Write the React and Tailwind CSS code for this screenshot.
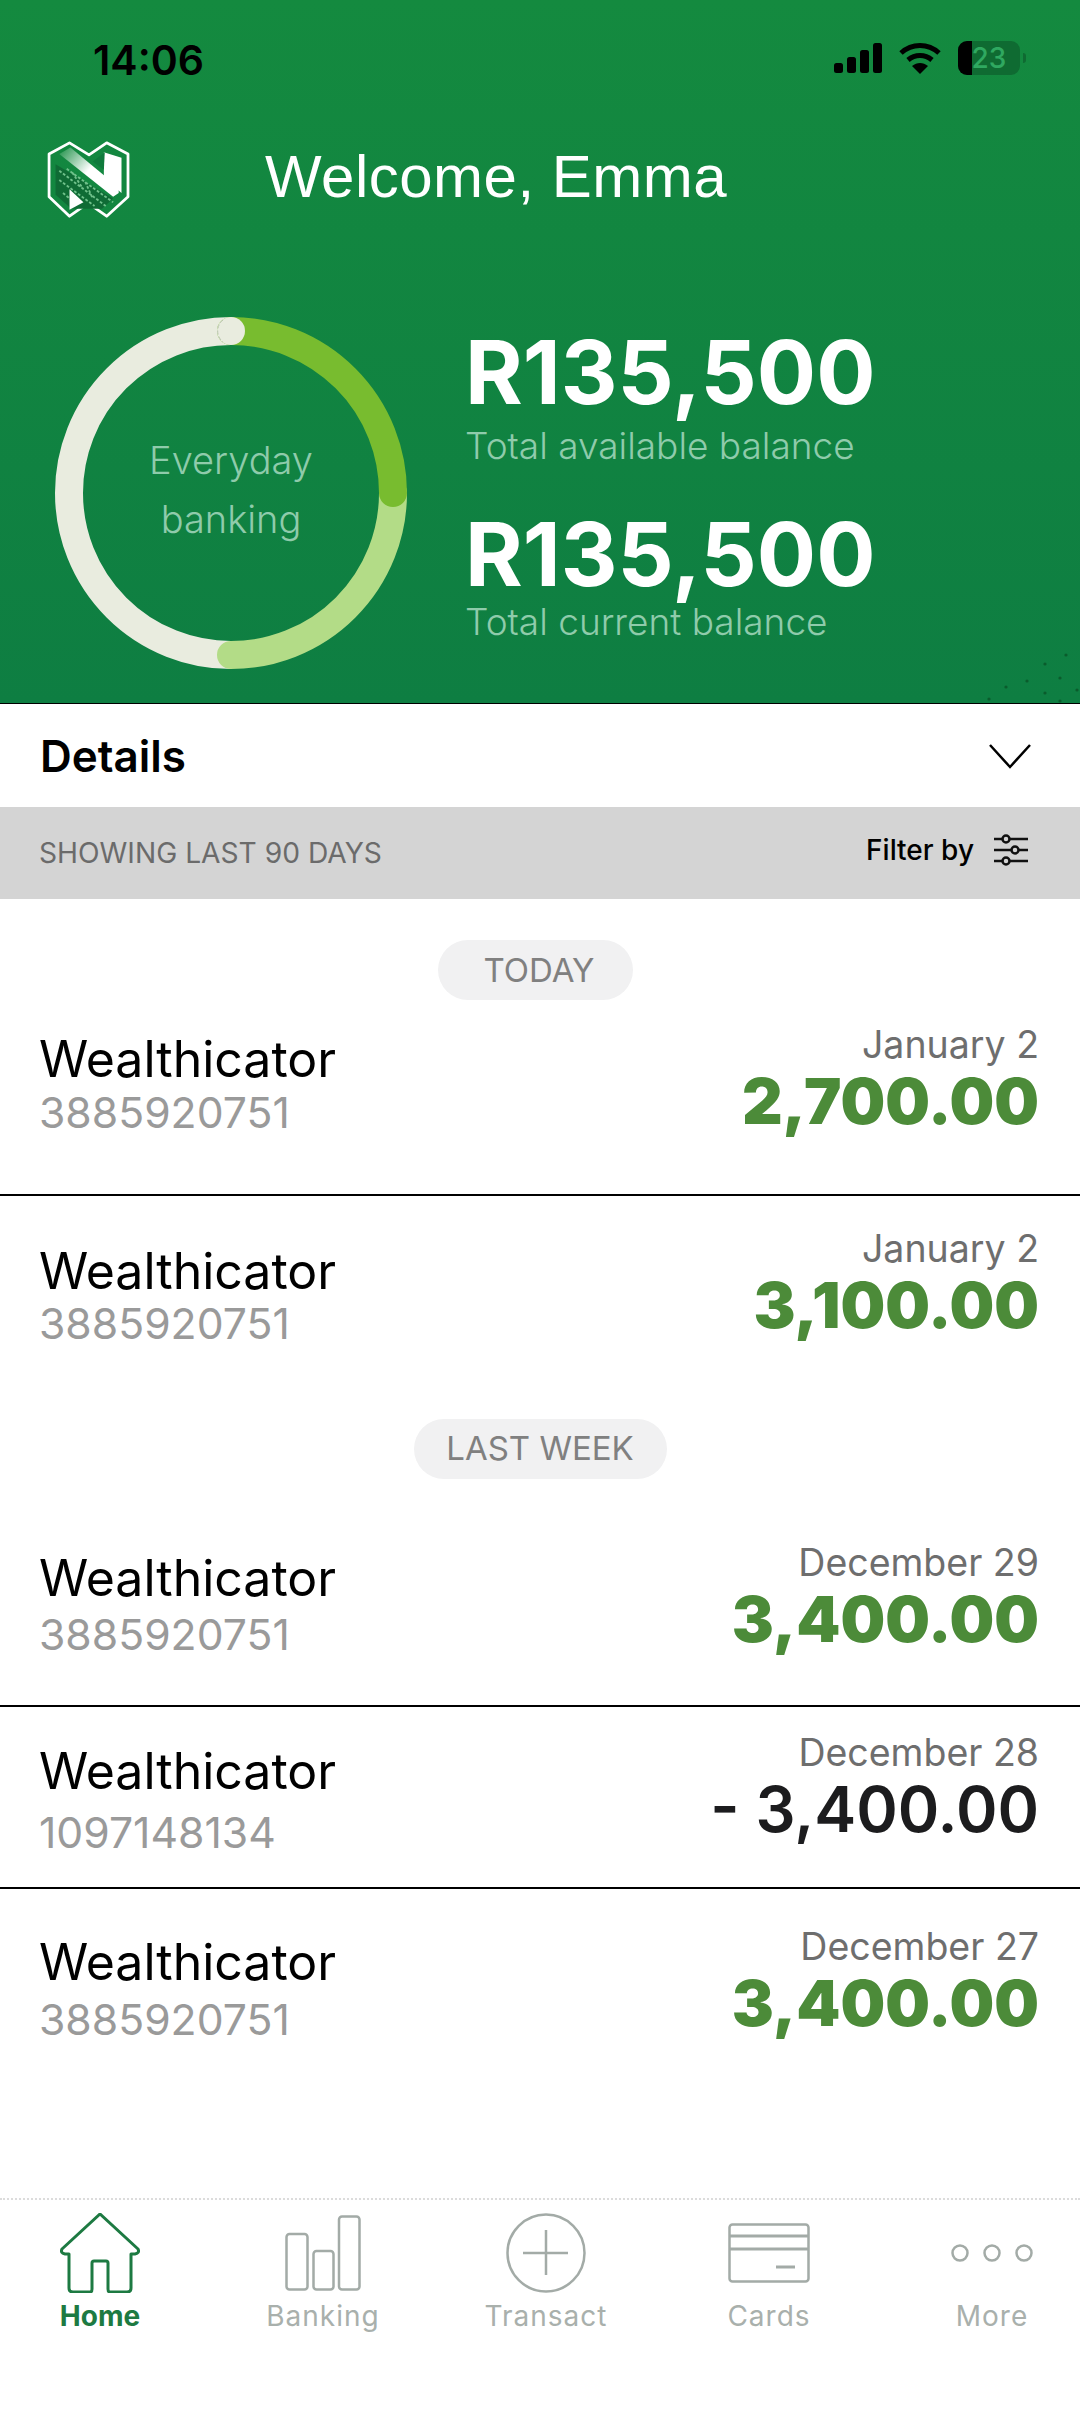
const inter = "font-['Inter',sans-serif]";

function Logo() {
  return (
    <svg width="86" height="78" viewBox="0 0 92 84" fill="none">
      <path d="M3 14 L25 2 L46 15 L65 2 L88 14 L88 60 L65 81 L45 67 L25 81 L3 60 Z" stroke="#fff" strokeWidth="3" strokeLinejoin="round" />
      <defs>
        <linearGradient id="nb" x1="0" y1="0" x2="1" y2="0.7">
          <stop offset="0" stopColor="#1b8f45" />
          <stop offset="0.55" stopColor="#ffffff" />
          <stop offset="1" stopColor="#ffffff" />
        </linearGradient>
      </defs>
      <path d="M10 25 L10 58 L27 73 L60 73 L72 62 Z" fill="#0f6b35" />
      <path d="M14 32 L64 70 M14 42 L52 70 M22 30 L72 66 M18 56 L30 66 M28 34 L40 52 M42 44 L50 62" stroke="#6fc08a" strokeWidth="2" strokeDasharray="3 2" />
      <path d="M14 14 L26 7 L78 50 L78 56 L72 60 Z" fill="url(#nb)" />
      <path d="M62 12 L81 18 L81 56 L62 40 Z" fill="#fff" />
      <path d="M63 12 L50 22 L62 31 Z" fill="#0f7a3c" />
      <path d="M25 52 L40 66 L25 74 Z" fill="#fff" />
    </svg>
  );
}

function Donut() {
  return (
    <svg width="360" height="360" viewBox="0 0 360 360" fill="none" className="shrink-0">
      <path d="M180 342 A 162 162 0 0 1 180 18" stroke="#e9ecdf" strokeWidth="28" />
      <path d="M342 180 A 162 162 0 0 1 180 342" stroke="#b3dc87" strokeWidth="28" strokeLinecap="round" />
      <path d="M180 18 A 162 162 0 0 1 342 180" stroke="#78bc2f" strokeWidth="28" strokeLinecap="round" />
      <circle cx="180" cy="18" r="14" fill="#e9ecdf" />
      <path d="M172 7 A 14 14 0 0 0 172 29" stroke="#b9c4ae" strokeWidth="1" strokeDasharray="4 2" />
    </svg>
  );
}

function Pill({ children, cls }) {
  return (
    <div className="flex justify-center">
      <div className={`flex h-[60px] items-center justify-center rounded-full bg-[#f1f1f2] text-[33px] text-[#808080] ${cls}`}>
        {children}
      </div>
    </div>
  );
}

function Row({ date, amount, num = "3885920751", rowCls, leftCls, rightCls, numCls, negative }) {
  return (
    <div className={`flex items-start justify-between pl-[39px] pr-[41px] ${rowCls}`}>
      <div className={leftCls}>
        <div className="h-[60px] text-[50px] leading-[60px] text-black">Wealthicator</div>
        <div className={`h-[44px] text-[42.7px] leading-[44px] text-[#9a9a9a] ${numCls}`}>{num}</div>
      </div>
      <div className={`text-right ${rightCls}`}>
        <div className="h-[44px] text-[37.5px] leading-[44px] text-[#6e6e6e]">{date}</div>
        <div className={negative ? "h-[68px] text-[63px] font-semibold leading-[68px] text-[#1c1c1e]" : "h-[68px] text-[63px] font-black leading-[68px] text-[#4c8b39]"}>
          {amount}
        </div>
      </div>
    </div>
  );
}

function NavItem({ icon, label, active }) {
  return (
    <div className="flex w-40 flex-col items-center">
      <div className="flex h-[80px] items-center justify-center">{icon}</div>
      <div className={active ? "mt-[5px] text-[28px] font-bold leading-9 text-[#1d7a42]" : "mt-[5px] text-[28px] leading-9 tracking-[1px] text-[#a9b0ac]"}>
        {label}
      </div>
    </div>
  );
}

const grey = "#a3aba7";

export default function App() {
  return (
    <div className={`relative h-[2430px] w-[1080px] overflow-hidden bg-white ${inter}`}>
      <header className="relative h-[704px] border-b border-black bg-gradient-to-b from-[#148a3f] to-[#0e7e42]">
        <div className="flex h-[133px] items-start justify-between pl-[93px] pr-[54px] pt-[36px]">
          <span className="text-[41px] font-semibold leading-[48px] text-black">14:06</span>
          <div className="flex items-center gap-[17px] pt-[5px]">
            <svg width="48" height="30" viewBox="0 0 48 30" fill="#000">
              <rect x="0" y="20" width="9" height="10" rx="2.5" />
              <rect x="13" y="14" width="9" height="16" rx="2.5" />
              <rect x="26" y="7" width="9" height="23" rx="2.5" />
              <rect x="39" y="0" width="9" height="30" rx="2.5" />
            </svg>
            <svg width="42" height="32" viewBox="0 0 42 32" fill="none" stroke="#000" strokeWidth="5">
              <path d="M2 11 C 13 1, 29 1, 40 11" />
              <path d="M9 18 C 16 12, 26 12, 33 18" />
              <path d="M21 32 L13 24 C 18 20, 24 20, 29 24 Z" fill="#000" stroke="none" />
            </svg>
            <div className="flex items-center gap-[3px]">
              <div className="relative flex h-[34px] w-[62px] items-center justify-center overflow-hidden rounded-[9px] bg-[#0f6b32] text-[28px] font-medium leading-none text-[#2fa860]">
                <div className="absolute inset-y-0 left-0 w-[14px] bg-black" />
                <span className="relative">23</span>
              </div>
              <div className="h-[10px] w-[3px] rounded-r bg-[#0f6b32]" />
            </div>
          </div>
        </div>
        <div className="flex h-[84px] items-center pl-[46px] pt-[4px]">
          <div className="mt-[6px] flex">
            <Logo />
          </div>
          <h1 className="ml-[133px] font-['Liberation_Sans',sans-serif] text-[60px] leading-none tracking-[0.5px] text-white">Welcome, Emma</h1>
        </div>
        <div className="flex pl-[51px] pt-[96px]">
          <div className="relative h-[360px] w-[360px]">
            <Donut />
            <div className="absolute inset-0 flex flex-col items-center justify-center pb-[6px] text-[38px] font-light leading-[59px] text-[#8fcbab]">
              <span>Everyday</span>
              <span>banking</span>
            </div>
          </div>
          <div className="ml-[54px] flex flex-col">
            <div className="mt-[9px] text-[88px] font-bold leading-[100px] text-white">R135,500</div>
            <div className="mt-[2px] text-[37px] font-light leading-[44px] text-[#8fcbab]">Total available balance</div>
            <div className="mt-[36px] text-[88px] font-bold leading-[100px] text-white">R135,500</div>
            <div className="mt-[-4px] text-[37px] font-light leading-[44px] text-[#8fcbab]">Total current balance</div>
          </div>
        </div>
        <svg className="absolute left-0 top-0" width="1080" height="704" fill="#0a5c2c">
          <circle cx="1066" cy="655" r="1.6" /><circle cx="1045" cy="664" r="1.6" /><circle cx="1060" cy="678" r="1.6" />
          <circle cx="1027" cy="681" r="1.6" /><circle cx="1006" cy="687" r="1.6" /><circle cx="1045" cy="693" r="1.6" />
          <circle cx="1077" cy="690" r="1.6" /><circle cx="989" cy="699" r="1.6" /><circle cx="1060" cy="701" r="1.6" />
        </svg>
      </header>

      <div className="flex h-[103px] items-center justify-between pl-[40px] pr-[49px]">
        <span className="text-[44px] font-semibold text-black">Details</span>
        <svg width="42" height="26" viewBox="0 0 42 26" fill="none" stroke="#000" strokeWidth="2.5">
          <path d="M1 2 L21 24 L41 2" />
        </svg>
      </div>

      <div className="flex h-[92px] items-center justify-between bg-[#d4d4d4] pl-[39px] pr-[52px]">
        <span className="text-[28.2px] text-[#6b6b6b]">SHOWING LAST 90 DAYS</span>
        <div className="flex items-center gap-[20px] pb-[6px]">
          <span className="text-[28px] font-medium text-black">Filter by</span>
          <svg width="34" height="32" viewBox="0 0 34 32" fill="none" stroke="#111" strokeWidth="2.5">
            <path d="M0 5 H34 M0 16 H34 M0 27 H34" />
            <circle cx="12" cy="5" r="3.5" fill="#d4d4d4" />
            <circle cx="21" cy="16" r="3.5" fill="#d4d4d4" />
            <circle cx="12" cy="27" r="3.5" fill="#d4d4d4" />
          </svg>
        </div>
      </div>

      <div className="pr-[9px] pt-[41px]">
        <Pill cls="w-[195px] pl-[7px] pt-[2px]">TODAY</Pill>
      </div>
      <Row date="January 2" amount="2,700.00" rowCls="h-[196px] border-b-2 border-black" leftCls="pt-[29px]" rightCls="pt-[23px]" numCls="mt-[2px]" />
      <Row date="January 2" amount="3,100.00" rowCls="h-[223px]" leftCls="pt-[45px]" rightCls="pt-[31px]" numCls="mt-[1px]" />
      <Pill cls="w-[253px]">LAST WEEK</Pill>
      <Row date="December 29" amount="3,400.00" rowCls="h-[228px] border-b-2 border-black" leftCls="pt-[69px]" rightCls="pt-[62px]" numCls="mt-[5px]" />
      <Row date="December 28" amount="- 3,400.00" num="1097148134" negative rowCls="h-[182px] border-b-2 border-black" leftCls="pt-[34px]" rightCls="pt-[24px]" numCls="mt-[10px]" />
      <Row date="December 27" amount="3,400.00" rowCls="h-[309px]" leftCls="pt-[43px]" rightCls="pt-[36px]" numCls="mt-[6px]" />

      <nav className="flex gap-[63px] border-t-2 border-dotted border-[#dcdcdc] pl-5 pt-[13px]">
        <NavItem active label="Home" icon={
          <svg width="80" height="80" viewBox="0 0 80 80" fill="none" stroke="#1d7a42" strokeWidth="3" strokeLinejoin="round">
            <path d="M40 1 L78 36 Q80 40 75 41 L71 41 L71 75 Q71 79 67 79 L50 79 Q48 79 48 76 L48 50 Q48 48 46 48 L34 48 Q32 48 32 50 L32 76 Q32 79 30 79 L13 79 Q9 79 9 75 L9 41 L5 41 Q0 40 2 36 Z" />
          </svg>
        } />
        <NavItem label="Banking" icon={
          <svg width="76" height="76" viewBox="0 0 76 76" fill="none" stroke={grey} strokeWidth="2.5">
            <rect x="1.5" y="19" width="21" height="55.5" rx="3" />
            <rect x="28.5" y="36" width="20" height="38.5" rx="3" />
            <rect x="54" y="1.5" width="20.5" height="73" rx="3" />
          </svg>
        } />
        <NavItem label="Transact" icon={
          <svg width="80" height="80" viewBox="0 0 80 80" fill="none" stroke={grey} strokeWidth="2.5">
            <circle cx="40" cy="40" r="38.5" />
            <path d="M40 17 V62 M17 40 H62" />
          </svg>
        } />
        <NavItem label="Cards" icon={
          <svg width="82" height="60" viewBox="0 0 82 60" fill="none" stroke={grey} strokeWidth="2.5">
            <rect x="1.5" y="1.5" width="79" height="57" rx="3" />
            <path d="M2 13 H80 M2 26 H80 M48 44 H67" strokeWidth="3" />
          </svg>
        } />
        <NavItem label="More" icon={
          <svg width="82" height="20" viewBox="0 0 82 20" fill="none" stroke={grey} strokeWidth="2.5">
            <circle cx="9" cy="10" r="7.5" />
            <circle cx="41" cy="10" r="7.5" />
            <circle cx="73" cy="10" r="7.5" />
          </svg>
        } />
      </nav>
    </div>
  );
}
